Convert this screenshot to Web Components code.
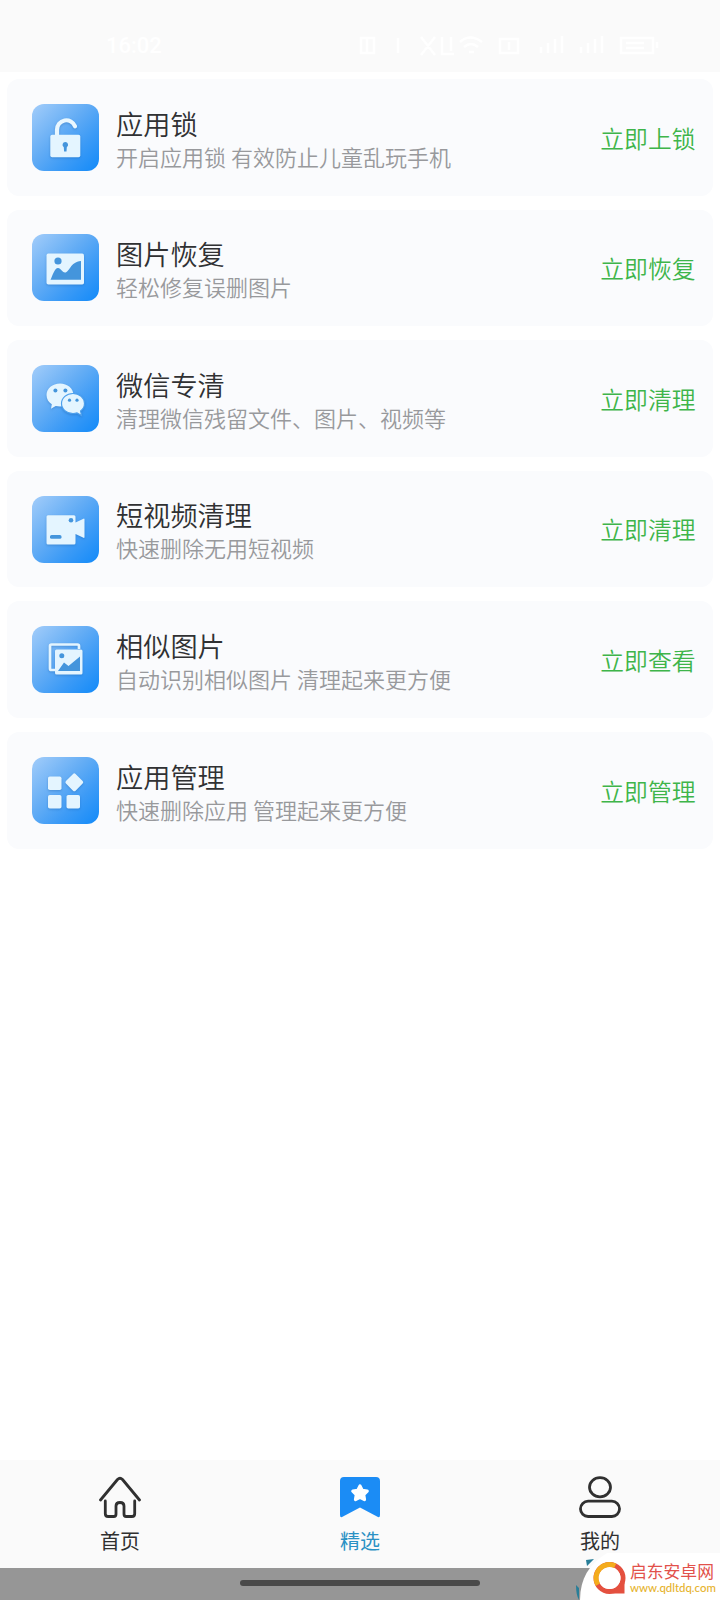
<!DOCTYPE html>
<html lang="zh-CN">
<head>
<meta charset="UTF-8">
<meta name="viewport" content="width=device-width, initial-scale=1.0">
<title>精选</title>
<style>
  body {
    margin: 0;
    background: #fff;
    font-family: "Noto Sans CJK SC", sans-serif;
  }
</style>
</head>
<body>
<tools-app></tools-app>

<script>
const ICONS = {
  lock: `
    <path d="M25 32V25a9.300 9.300 0 0 1 18-3.500" fill="none" stroke="#e9f7ff" stroke-width="4.200" stroke-linecap="round" transform="translate(0 .8)"/>
    <rect x="18.300" y="30.800" width="30" height="22.500" rx="1.800"/>
    <path class="hole" d="M33.300 38a2.900 2.900 0 0 1 1.500 5.300l-.3 4.200h-2.400l-.3-4.200a2.900 2.900 0 0 1 1.500-5.300z"/>`,
  picture: `
    <rect x="14.500" y="19.600" width="37.500" height="31" rx="1.800"/>
    <circle class="hole" cx="26" cy="27" r="3.600"/>
    <path class="hole" d="M18.500 45.800c2-4 4-11.800 7.500-11.800 3 0 4 4.500 7 4.500 4.500 0 5-10.500 16-11.500v18.800z"/>`,
  wechat: `
    <path d="M28 18.500c7.500 0 13.500 5 13.500 11.500S35.500 41.500 28 41.500c-1.500 0-3-.2-4.300-.5l-4.700 2.800.8-4.500c-3.200-2-5.300-5.300-5.300-9.300 0-6.500 6-11.500 13.500-11.500z"/>
    <path d="M41 28.500c6.400 0 11.500 4.400 11.500 10 0 3-1.500 5.700-3.900 7.500l.9 4.500-4.500-2.600c-1.300.4-2.600.6-4 .6-6.400 0-11.500-4.400-11.500-10s5.100-10 11.500-10z" stroke="#4b9fed" stroke-width="1.200"/>
    <g class="hole"><circle cx="23.400" cy="25.500" r="2"/><circle cx="33.400" cy="25.500" r="2"/><circle cx="37.500" cy="35.200" r="1.600"/><circle cx="45" cy="35.200" r="1.600"/></g>`,
  video: `
    <path d="M16 19.300h26a1.500 1.500 0 0 1 1.500 1.500v5.700l8-3.800q1-.4 1 .8v17.500q0 1.200-1 .8l-8-3.800v9a1.500 1.500 0 0 1-1.500 1.500H16a1.500 1.500 0 0 1-1.500-1.500V20.800a1.500 1.500 0 0 1 1.500-1.500z"/>
    <circle class="hole" cx="39" cy="24.200" r="2.300"/>
    <rect class="hole" x="18" y="39" width="11.500" height="3.800" rx="1.600"/>`,
  similar: `
    <path d="M23 44h-3.500a1.500 1.500 0 0 1-1.500-1.500V20a1.500 1.500 0 0 1 1.500-1.500h26A1.500 1.500 0 0 1 47 20v3" fill="none" stroke="#e4f5ff" stroke-width="2.700"/>
    <rect x="23" y="23.500" width="27.500" height="25" rx="1.500"/>
    <circle class="hole" cx="29.800" cy="29.700" r="2.500"/>
    <path class="hole" d="M26 45l6-8.500 4.500 3.500L48 30.500V45z"/>`,
  apps: `
    <rect x="16" y="19.500" width="13.500" height="13.500" rx="1.800"/>
    <rect x="16" y="38" width="13.500" height="13.500" rx="1.800"/>
    <rect x="34.500" y="38" width="13.500" height="13.500" rx="1.800"/>
    <rect x="35.500" y="18.500" width="13.600" height="13.600" rx="1.800" transform="rotate(45 42.300 25.300)"/>`,
  home: `
    <path d="M1.500 24L18.500 3.500Q21 1 23.500 3.500L40.500 24M6.300 25v12.700q0 2.800 2.800 2.800h5.700q2.200 0 2.200-2.200V30q0-3.500 4-3.500t4 3.500v8.300q0 2.200 2.200 2.200h5.700q2.800 0 2.800-2.800V25"/>`,
  star: `
    <path d="M4 1h33q4 0 4 4v34q0 3.300-3 1.600L21 31.500 4 40.600q-3 1.700-3-1.600V5q0-4 4-4z" fill="#1b8cf5" stroke="none"/>
    <path d="M21 10l2.300 4.400 4.900.8-3.500 3.500.8 4.900-4.500-2.200-4.500 2.200.8-4.900-3.500-3.500 4.900-.8z" fill="#fff" stroke="#fff" stroke-width="3.200"/>`,
  user: `
    <ellipse cx="21" cy="11.300" rx="10.500" ry="9.600"/>
    <rect x="1.500" y="25.200" width="39" height="15.300" rx="7.600"/>`
};

class StatusBar extends HTMLElement {
  connectedCallback() {
    this.attachShadow({ mode: 'open' });
    this.shadowRoot.innerHTML = `
      <style>
        :host {
          display: flex;
          justify-content: space-between;
          align-items: center;
          box-sizing: border-box;
          height: 72px;
          padding: 20px 57px 0 106px;
          background: #fafafa;
          color: #fff;
          font: 500 22px/24px Roboto, sans-serif;
        }
        svg { fill: none; stroke: #fff; stroke-width: 2.5; }
      </style>
      <span>16:02</span>
      <svg width="306" height="28" viewBox="0 0 306 28">
        <path d="M4 6h13v15H4zM10 6v15M41 6v15M64 5l14 18M78 5L64 23M85 5v17h12M94 5v14"/>
        <path d="M103 10q10-9 22 0M107 15q7-6 14 0M112 20h5M143 7h18v14h-18zM152 10v8"/>
        <path d="M184 21v-6M191 21V11M198 21V7M205 21V4M224 21v-6M231 21V11M238 21V7M245 21V4"/>
        <path d="M264 6h32v15h-32zM269 11h18M269 16h18M300 10v6"/>
      </svg>
    `;
  }
}
customElements.define('status-bar', StatusBar);

class ToolCard extends HTMLElement {
  connectedCallback() {
    this.attachShadow({ mode: 'open' });
    this.shadowRoot.innerHTML = `
      <style>
        :host {
          display: flex;
          align-items: center;
          box-sizing: border-box;
          height: 116.600px;
          padding: 0 17.500px 0 25px;
          border-radius: 12px;
          background: #fafbfd;
        }
        .icon {
          width: 67px;
          height: 67px;
          flex: none;
          margin-right: 17px;
          border-radius: 12px;
          background: linear-gradient(135deg, #a3cdfa 0%, #64adf5 42%, #3d9bf6 68%, #128af9 100%);
        }
        .icon svg {
          display: block;
          fill: #e4f5ff;
          filter: drop-shadow(0 1.500px 1px rgba(20, 85, 160, 0.35));
        }
        .hole { fill: #4495dc; }
        .text {
          flex: 1;
          display: flex;
          flex-direction: column;
          padding-top: 0.500px;
          white-space: nowrap;
        }
        .title {
          color: #303133;
          font-size: 27.200px;
          line-height: 36px;
          font-weight: 350;
        }
        .desc {
          color: #98999c;
          font-size: 22px;
          line-height: 30px;
          font-weight: 350;
        }
        .action {
          color: #3eb54a;
          font-size: 23.800px;
          line-height: 34px;
          padding-top: 0.500px;
          font-weight: 350;
        }
      </style>
      <div class="icon"><svg width="67" height="67" viewBox="0 0 67 67">${ICONS[this.getAttribute('icon')]}</svg></div>
      <div class="text">
        <span class="title"><slot name="title"></slot></span>
        <span class="desc"><slot></slot></span>
      </div>
      <span class="action"><slot name="action"></slot></span>
    `;
  }
}
customElements.define('tool-card', ToolCard);

class TabItem extends HTMLElement {
  connectedCallback() {
    this.attachShadow({ mode: 'open' });
    this.shadowRoot.innerHTML = `
      <style>
        :host {
          flex: 1;
          display: flex;
          flex-direction: column;
          align-items: center;
          padding-top: 16px;
          color: #303030;
          font-size: 20px;
          line-height: 30px;
        }
        :host([active]) { color: #2b91c4; }
        svg {
          fill: none;
          stroke: #303030;
          stroke-width: 2.800;
          stroke-linecap: round;
          stroke-linejoin: round;
          margin-bottom: 8px;
        }
      </style>
      <svg width="42" height="42" viewBox="0 0 42 42">${ICONS[this.getAttribute('icon')]}</svg>
      <span><slot></slot></span>
    `;
  }
}
customElements.define('tab-item', TabItem);

class SiteMark extends HTMLElement {
  connectedCallback() {
    this.attachShadow({ mode: 'open' });
    this.shadowRoot.innerHTML = `
      <style>
        :host {
          position: absolute;
          right: 0;
          bottom: 0;
          isolation: isolate;
          display: flex;
          align-items: flex-start;
          box-sizing: border-box;
          width: 145px;
          height: 47px;
          padding: 8px 0 0 18px;
        }
        .back { position: absolute; left: 0; top: 0; z-index: -1; }
        .logo { flex: none; margin-right: 4px; }
        .words { display: flex; flex-direction: column; white-space: nowrap; }
        b {
          color: #e2514b;
          font-size: 16.800px;
          line-height: 20px;
          font-weight: 400;
        }
        small {
          color: #e6b32e;
          font: 500 11.400px/14px Lato, sans-serif;
        }
      </style>
      <svg class="back" width="145" height="47" viewBox="0 0 145 47">
        <path d="M32 0Q5 16 5 47h140V0z" fill="#fff"/>
        <path d="M11 7l8-1-7 7zM1 32l3 3v12q-3-5-3-15z" fill="#287e98"/>
      </svg>
      <svg class="logo" width="33" height="34" viewBox="0 0 33 34" fill="none" stroke-width="5">
        <circle cx="16.500" cy="17" r="13.500" stroke="#e4503f"/>
        <path d="M31.500 21v11.500H20z" fill="#e4503f"/>
        <circle cx="16.500" cy="17" r="11" fill="#fff"/>
        <path d="M4.810 23.750A13.500 13.500 0 0 1 22.200 4.760" stroke="#f4ac1c"/>
      </svg>
      <div class="words"><b>启东安卓网</b><small>www.qdltdq.com</small></div>
    `;
  }
}
customElements.define('site-mark', SiteMark);

class ToolsApp extends HTMLElement {
  connectedCallback() {
    this.attachShadow({ mode: 'open' });
    this.shadowRoot.innerHTML = `
      <style>
        :host {
          position: relative;
          display: flex;
          flex-direction: column;
          width: 720px;
          height: 1600px;
          overflow: hidden;
          background: #fff;
        }
        main {
          flex: 1;
          display: flex;
          flex-direction: column;
          gap: 14px;
          padding: 7px 7px 0;
        }
        nav {
          display: flex;
          height: 108px;
          background: #fafafa;
        }
        .gesture {
          display: flex;
          justify-content: center;
          align-items: center;
          height: 32px;
          background: #969696;
        }
        .gesture i {
          width: 240px;
          height: 6px;
          margin-top: -2px;
          border-radius: 3px;
          background: #4a4a4a;
        }
      </style>
      <status-bar></status-bar>
      <main>
        <tool-card icon="lock"><span slot="title">应用锁</span>开启应用锁 有效防止儿童乱玩手机<span slot="action">立即上锁</span></tool-card>
        <tool-card icon="picture"><span slot="title">图片恢复</span>轻松修复误删图片<span slot="action">立即恢复</span></tool-card>
        <tool-card icon="wechat"><span slot="title">微信专清</span>清理微信残留文件、图片、视频等<span slot="action">立即清理</span></tool-card>
        <tool-card icon="video"><span slot="title">短视频清理</span>快速删除无用短视频<span slot="action">立即清理</span></tool-card>
        <tool-card icon="similar"><span slot="title">相似图片</span>自动识别相似图片 清理起来更方便<span slot="action">立即查看</span></tool-card>
        <tool-card icon="apps"><span slot="title">应用管理</span>快速删除应用 管理起来更方便<span slot="action">立即管理</span></tool-card>
      </main>
      <nav>
        <tab-item icon="home">首页</tab-item>
        <tab-item icon="star" active>精选</tab-item>
        <tab-item icon="user">我的</tab-item>
      </nav>
      <div class="gesture"><i></i></div>
      <site-mark></site-mark>
    `;
  }
}
customElements.define('tools-app', ToolsApp);
</script>
</body>
</html>
